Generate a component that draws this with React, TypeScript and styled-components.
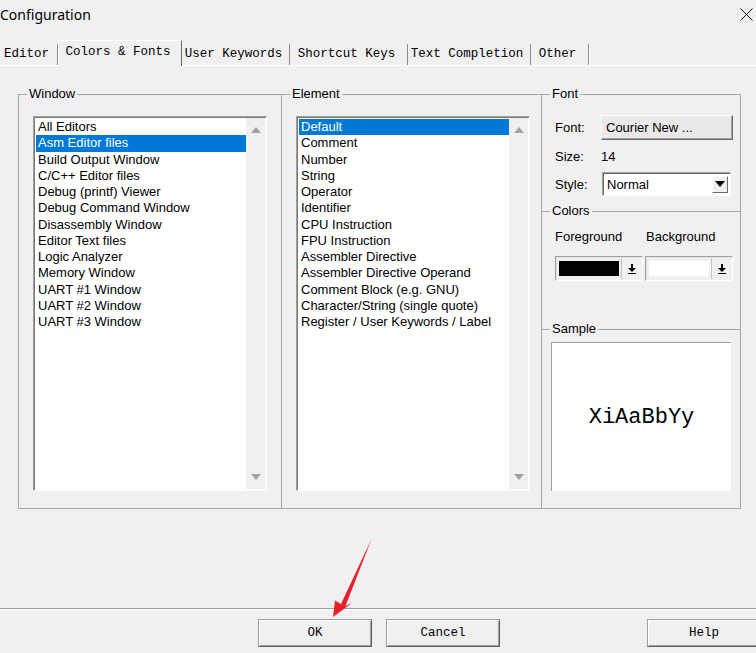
import React from "react";
import styled, { createGlobalStyle } from "styled-components";

const GlobalStyle = createGlobalStyle`
  html, body { margin: 0; padding: 0; background: #f0f0f0; }
  body { font-family: "Liberation Sans", Arial, sans-serif; font-size: 13px; color: #000; }
  * { box-sizing: border-box; }
`;

const Dialog = styled.div`
  position: relative;
  width: 756px;
  height: 653px;
  overflow: hidden;
  background: #f0f0f0;
  display: flex;
  flex-direction: column;
`;

const TitleBar = styled.div`
  height: 30px;
  flex: none;
  display: flex;
  align-items: center;
  justify-content: space-between;
  padding: 0 3px 2px 0;
`;

const Title = styled.div`
  font-family: "Noto Sans", "Open Sans", sans-serif;
  font-size: 14px;
  color: #000;
`;

const CloseIcon = styled.svg`
  width: 13px;
  height: 13px;
  display: block;
`;

const TabStrip = styled.div`
  margin-top: 10px;
  height: 25px;
  flex: none;
  display: flex;
  align-items: flex-end;
  position: relative;
  z-index: 1;
`;

const Tab = styled.div<{ $w: number; $active?: boolean }>`
  width: ${(p) => p.$w}px;
  font-family: "Liberation Mono", "Courier New", monospace;
  font-size: 12.5px;
  text-align: center;
  white-space: nowrap;
  padding-right: 4px;
  color: #000;
  background: #f0f0f0;
  ${(p) =>
    p.$active
      ? `
    height: 26px;
    margin-bottom: -1px;
    line-height: 22px;
    border-top: 1px solid #fff;
    border-left: 1px solid #fff;
    border-right: 1px solid #6b6b6b;
  `
      : `
    height: 21px;
    line-height: 21px;
    border-right: 1px solid #8c8c8c;
    box-shadow: 1px 0 0 #fff;
  `}
`;

const Panel = styled.div`
  flex: 1;
  border-top: 1px solid #fff;
  padding: 20px 0 0 18px;
`;

const GroupRow = styled.div`
  display: flex;
  align-items: flex-start;
`;

const Group = styled.fieldset<{ $w: number }>`
  margin: 0;
  padding: 0;
  min-width: 0;
  width: ${(p) => p.$w}px;
  height: 423px;
  border: 1px solid #a8a8a8;
  border-right: none;
`;

const Legend = styled.legend`
  margin-left: 8px;
  padding: 0 2px;
  font-size: 13px;
  line-height: 16px;
  color: #000;
`;

const GroupBody = styled.div`
  padding: 14px 0 0 14px;
`;

const ListBox = styled.div`
  width: 234px;
  height: 375px;
  display: flex;
  background: #fff;
  padding: 1px;
  border: 1px solid;
  border-color: #a0a0a0 #fff #fff #a0a0a0;
  box-shadow: inset 1px 1px 0 #7a7a7a;
`;

const Items = styled.div`
  flex: 1;
  padding-top: 1px;
  padding-left: 1px;
  min-width: 0;
`;

const Item = styled.div<{ $selected?: boolean }>`
  height: 16.25px;
  line-height: 16.25px;
  padding-left: 2px;
  white-space: nowrap;
  overflow: hidden;
  font-size: 13px;
  background: ${(p) => (p.$selected ? "#0078d7" : "transparent")};
  color: ${(p) => (p.$selected ? "#fff" : "#000")};
`;

const ScrollTrack = styled.div`
  width: 19px;
  background: #f0f0f0;
  display: flex;
  flex-direction: column;
  justify-content: space-between;
  align-items: center;
  padding: 9px 0 9px;
`;

const Arrow = styled.div<{ $dir: "up" | "down"; $color?: string }>`
  width: 0;
  height: 0;
  border-left: 5px solid transparent;
  border-right: 5px solid transparent;
  ${(p) =>
    p.$dir === "up"
      ? `border-bottom: 6px solid ${p.$color || "#a3a3a3"};`
      : `border-top: 6px solid ${p.$color || "#a3a3a3"};`}
`;

const RightColumn = styled.div`
  width: 200px;
  height: 415px;
  margin-top: 8px;
  border: 1px solid #a8a8a8;
  border-top: none;
  display: flex;
  flex-direction: column;
`;

const Section = styled.fieldset<{ $first?: boolean; $grow?: boolean }>`
  margin: ${(p) => (p.$first ? "-8px 0 0" : "0")};
  padding: 0;
  min-width: 0;
  border: none;
  border-top: 1px solid #a8a8a8;
  ${(p) => (p.$grow ? "flex: 1;" : "")}
`;

const FontGrid = styled.div`
  display: grid;
  grid-template-columns: 46px auto;
  grid-template-rows: 25px 32px 24px;
  align-items: center;
  padding: 13px 0 7px 13px;
`;

const FieldLabel = styled.span`
  font-size: 13px;
`;

const FontButton = styled.div`
  width: 132px;
  height: 25px;
  line-height: 23px;
  padding-left: 4px;
  background: #e9e9e9;
  border: 1px solid;
  border-color: #fff #6b6b6b #6b6b6b #fff;
  box-shadow: inset -1px -1px 0 #a0a0a0;
  font-size: 13px;
`;

const SizeValue = styled.span`
  font-size: 13px;
`;

const Select = styled.div`
  width: 129px;
  height: 24px;
  margin-left: 1px;
  display: flex;
  align-items: center;
  justify-content: space-between;
  background: #fff;
  border: 1px solid;
  border-color: #a0a0a0 #fff #fff #a0a0a0;
  box-shadow: inset 1px 1px 0 #6b6b6b;
  padding: 2px 2px 2px 4px;
  font-size: 13px;
`;

const SelectButton = styled.div`
  width: 16px;
  height: 17px;
  background: #f0f0f0;
  border: 1px solid;
  border-color: #fff #6b6b6b #6b6b6b #fff;
  display: flex;
  align-items: center;
  justify-content: center;
`;

const ColorsBody = styled.div`
  padding: 10px 0 40px 13px;
  display: grid;
  grid-template-columns: 88px 88px;
  column-gap: 2px;
  row-gap: 11px;
`;

const ColorLabel = styled.div<{ $indent?: number }>`
  height: 16px;
  line-height: 16px;
  font-size: 13px;
  padding-left: ${(p) => p.$indent || 0}px;
`;

const Picker = styled.div`
  height: 25px;
  display: flex;
  background: #f0f0f0;
  border: 1px solid;
  border-color: #a0a0a0 #fff #fff #a0a0a0;
  box-shadow: inset 1px 1px 0 #e3e3e3;
  padding: 4px 1px 4px 3px;
`;

const Swatch = styled.div<{ $color: string }>`
  width: 60px;
  background: ${(p) => p.$color};
  border: 1px solid ${(p) => (p.$color === "#000" ? "#000" : "#fff")};
`;

const PickerDrop = styled.div`
  flex: 1;
  margin-left: 2px;
  margin-top: -3px;
  margin-bottom: -3px;
  border-left: 1px solid #c4c4c4;
  display: flex;
  align-items: center;
  justify-content: center;
`;

const SampleBody = styled.div`
  padding: 5px 0 0 9px;
`;

const SampleBox = styled.div`
  width: 180px;
  height: 149px;
  background: #fff;
  border-top: 1px solid #a0a0a0;
  border-left: 1px solid #a0a0a0;
  display: flex;
  align-items: center;
  justify-content: center;
  font-family: "Liberation Mono", "Courier New", monospace;
  font-size: 22px;
  color: #000;
`;

const Separator = styled.div`
  flex: none;
  height: 2px;
  border-top: 1px solid #9a9a9a;
  border-bottom: 1px solid #fff;
`;

const Footer = styled.div`
  flex: none;
  height: 43px;
  display: flex;
  align-items: flex-start;
  gap: 14px;
  padding: 9px 0 0 258px;
`;

const DialogButton = styled.div<{ $offset?: number }>`
  flex: none;
  width: 114px;
  height: 28px;
  margin-left: ${(p) => p.$offset || 0}px;
  display: flex;
  align-items: center;
  justify-content: center;
  background: #f0f0f0;
  border: 1px solid;
  border-color: #a0a0a0 #5f5f5f #5f5f5f #a0a0a0;
  box-shadow: inset 1px 1px 0 #fff, inset -1px -1px 0 #a0a0a0;
  font-family: "Liberation Mono", "Courier New", monospace;
  font-size: 12.5px;
  color: #000;
`;

const Annotation = styled.svg`
  position: absolute;
  left: 325px;
  top: 535px;
  width: 55px;
  height: 90px;
  pointer-events: none;
`;

const DropGlyph = () => (
  <svg width="8" height="10" viewBox="0 0 8 10">
    <rect x="3" y="0" width="2" height="4" fill="#000" />
    <polygon points="0,4 8,4 4,8" fill="#000" />
    <rect x="0" y="9" width="8" height="1" fill="#000" />
  </svg>
);

const windowItems = [
  "All Editors",
  "Asm Editor files",
  "Build Output Window",
  "C/C++ Editor files",
  "Debug (printf) Viewer",
  "Debug Command Window",
  "Disassembly Window",
  "Editor Text files",
  "Logic Analyzer",
  "Memory Window",
  "UART #1 Window",
  "UART #2 Window",
  "UART #3 Window",
];

const elementItems = [
  "Default",
  "Comment",
  "Number",
  "String",
  "Operator",
  "Identifier",
  "CPU Instruction",
  "FPU Instruction",
  "Assembler Directive",
  "Assembler Directive Operand",
  "Comment Block (e.g. GNU)",
  "Character/String (single quote)",
  "Register / User Keywords / Label",
];

const tabs = [
  { label: "Editor", w: 58 },
  { label: "Colors & Fonts", w: 124, active: true },
  { label: "User Keywords", w: 108 },
  { label: "Shortcut Keys", w: 118 },
  { label: "Text Completion", w: 123 },
  { label: "Other", w: 58 },
];

const List = ({ items, selected }: { items: string[]; selected: number }) => (
  <ListBox>
    <Items>
      {items.map((it, i) => (
        <Item key={it} $selected={i === selected}>
          {it}
        </Item>
      ))}
    </Items>
    <ScrollTrack>
      <Arrow $dir="up" />
      <Arrow $dir="down" />
    </ScrollTrack>
  </ListBox>
);

export default function App() {
  return (
    <>
      <GlobalStyle />
      <Dialog>
        <TitleBar>
          <Title>Configuration</Title>
          <CloseIcon viewBox="0 0 13 13">
            <path d="M0.5 0.5 L12.5 12.5 M12.5 0.5 L0.5 12.5" stroke="#111" strokeWidth="1" fill="none" />
          </CloseIcon>
        </TitleBar>
        <TabStrip>
          {tabs.map((t) => (
            <Tab key={t.label} $w={t.w} $active={t.active}>
              {t.label}
            </Tab>
          ))}
        </TabStrip>
        <Panel>
          <GroupRow>
            <Group $w={263}>
              <Legend>Window</Legend>
              <GroupBody>
                <List items={windowItems} selected={1} />
              </GroupBody>
            </Group>
            <Group $w={260}>
              <Legend>Element</Legend>
              <GroupBody>
                <List items={elementItems} selected={0} />
              </GroupBody>
            </Group>
            <RightColumn>
              <Section $first>
                <Legend>Font</Legend>
                <FontGrid>
                  <FieldLabel>Font:</FieldLabel>
                  <FontButton>Courier New ...</FontButton>
                  <FieldLabel>Size:</FieldLabel>
                  <SizeValue>14</SizeValue>
                  <FieldLabel>Style:</FieldLabel>
                  <Select>
                    <span>Normal</span>
                    <SelectButton>
                      <Arrow $dir="down" $color="#000" />
                    </SelectButton>
                  </Select>
                </FontGrid>
              </Section>
              <Section>
                <Legend>Colors</Legend>
                <ColorsBody>
                  <ColorLabel>Foreground</ColorLabel>
                  <ColorLabel $indent={1}>Background</ColorLabel>
                  <Picker>
                    <Swatch $color="#000" />
                    <PickerDrop>
                      <DropGlyph />
                    </PickerDrop>
                  </Picker>
                  <Picker>
                    <Swatch $color="#fff" />
                    <PickerDrop>
                      <DropGlyph />
                    </PickerDrop>
                  </Picker>
                </ColorsBody>
              </Section>
              <Section $grow>
                <Legend>Sample</Legend>
                <SampleBody>
                  <SampleBox>XiAaBbYy</SampleBox>
                </SampleBody>
              </Section>
            </RightColumn>
          </GroupRow>
        </Panel>
        <Separator />
        <Footer>
          <DialogButton>OK</DialogButton>
          <DialogButton>Cancel</DialogButton>
          <DialogButton $offset={133}>Help</DialogButton>
        </Footer>
        <Annotation viewBox="325 535 55 90">
          <polygon
            points="333,617 335,600.5 341,604 371.5,539 345.5,606 352,603"
            fill="#e8202a"
          />
        </Annotation>
      </Dialog>
    </>
  );
}
